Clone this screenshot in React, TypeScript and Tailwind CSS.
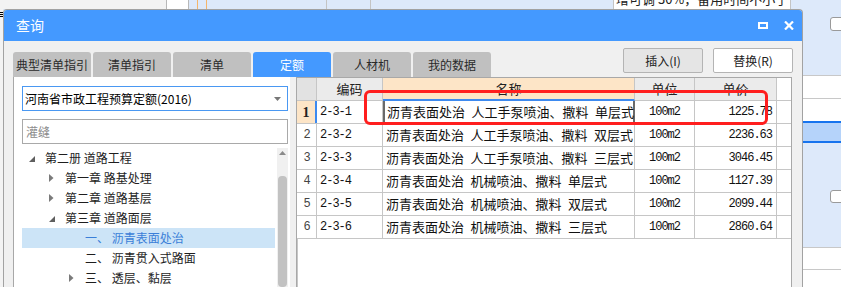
import React from "react";

type Row = { no: number; code: string; name: string; unit: string; price: string };

const rows: Row[] = [
  { no: 1, code: "2-3-1", name: "沥青表面处治\u2002人工手泵喷油、撒料\u2002单层式", unit: "100m2", price: "1225.78" },
  { no: 2, code: "2-3-2", name: "沥青表面处治\u2002人工手泵喷油、撒料\u2002双层式", unit: "100m2", price: "2236.63" },
  { no: 3, code: "2-3-3", name: "沥青表面处治\u2002人工手泵喷油、撒料\u2002三层式", unit: "100m2", price: "3046.45" },
  { no: 4, code: "2-3-4", name: "沥青表面处治\u2002机械喷油、撒料\u2002单层式", unit: "100m2", price: "1127.39" },
  { no: 5, code: "2-3-5", name: "沥青表面处治\u2002机械喷油、撒料\u2002双层式", unit: "100m2", price: "2099.44" },
  { no: 6, code: "2-3-6", name: "沥青表面处治\u2002机械喷油、撒料\u2002三层式", unit: "100m2", price: "2860.64" },
];

type Node = { label: string; level: 0 | 1 | 2; arrow?: "open" | "closed"; selected?: boolean };

const tree: Node[] = [
  { label: "第二册 道路工程", level: 0, arrow: "open" },
  { label: "第一章 路基处理", level: 1, arrow: "closed" },
  { label: "第二章 道路基层", level: 1, arrow: "closed" },
  { label: "第三章 道路面层", level: 1, arrow: "open" },
  { label: "一、 沥青表面处治", level: 2, selected: true },
  { label: "二、 沥青贯入式路面", level: 2 },
  { label: "三、 透层、黏层", level: 2, arrow: "closed" },
];

const tabs = ["典型清单指引", "清单指引", "清单", "定额", "人材机", "我的数据"];

const indent: Record<number, string> = { 0: "pl-[7px]", 1: "pl-[27px]", 2: "pl-[47px]" };

const mono = "font-['Liberation_Mono','Noto_Sans_CJK_SC',monospace] text-[12px] tracking-[-1px]";

function Arrow({ kind }: { kind?: "open" | "closed" }) {
  if (kind === "open")
    return (
      <svg width="6" height="6" viewBox="0 0 6 6" className="mt-[1px]">
        <path d="M6 0V6H0Z" fill="#5f5f5f" />
      </svg>
    );
  if (kind === "closed")
    return (
      <svg width="5" height="8" viewBox="0 0 5 8">
        <path d="M0 0L4.5 4L0 8Z" fill="#7a7a7a" />
      </svg>
    );
  return null;
}

function TreeRow({ node }: { node: Node }) {
  return (
    <div
      className={`flex h-[20px] items-center ${indent[node.level]} ${
        node.selected ? "bg-[#cce4f7] text-[#3a7fd8]" : "text-[#1e1e1e]"
      }`}
    >
      <span className="flex w-[16px] items-center">
        <Arrow kind={node.arrow} />
      </span>
      <span className="whitespace-pre">{node.label}</span>
    </div>
  );
}

function GridRow({ row }: { row: Row }) {
  const sel = row.no === 1;
  return (
    <div className="flex h-[23px] border-b border-[#c6c6c6]">
      <div
        className={`flex w-[20px] items-center justify-center ${
          sel
            ? "bg-[#fde5c7] border-r-2 border-[#3d8af0] font-['Liberation_Serif',serif] text-[14px] font-bold text-[#222]"
            : `border-r border-[#c6c6c6] ${mono} text-[#444]`
        }`}
      >
        {row.no}
      </div>
      <div className={`flex w-[66px] items-center border-r border-[#c6c6c6] pl-[3px] ${mono} text-[#111]`}>
        {row.code}
      </div>
      <div
        className={`flex w-[252px] items-center pl-[2px] text-[13px] text-[#111] whitespace-pre ${
          sel ? "border-x-2 border-[#6a6a6a]" : "border-r border-[#c6c6c6] pl-[3px]"
        }`}
      >
        {row.name}
      </div>
      <div className={`flex w-[60px] items-center justify-center border-r border-[#c6c6c6] ${mono} text-[#111]`}>
        {row.unit}
      </div>
      <div className={`flex w-[82px] items-center justify-end border-r border-[#c6c6c6] pr-[4px] ${mono} text-[#111]`}>
        {row.price}
      </div>
    </div>
  );
}

export default function App() {
  return (
    <div className="relative flex h-[287px] w-[841px] overflow-hidden bg-[#dde9fa] font-['Noto_Sans_CJK_SC',sans-serif] text-[12px]">
      {/* main column: background strip + dialog */}
      <div className="flex w-[803px] flex-col">
        {/* background app, top strip */}
        <div className="flex h-[9px] shrink-0">
          <div className="w-[167px] border-r border-[#b8b8b8] bg-[#f3f3f3]" />
          <div className="w-[22px] border-r border-[#b8b8b8] bg-white" />
          <div className="w-[9px] border-r border-[#f5b56a]" />
          <div className="w-[9px] border-r border-[#f5b56a]" />
          <div className="w-[120px] border-r border-[#c4c4c4]" />
          <div className="w-[44px] border-r border-[#c4c4c4]" />
          <div className="w-[242px]" />
          <div className="w-[178px] overflow-hidden border-x border-[#c4c4c4] bg-white">
            <div className="-mt-[9px] whitespace-nowrap pl-[2px] text-[13px] leading-[16px] text-[#222]">
              增可调 30%，备用时间不小于
            </div>
          </div>
        </div>
        <div className="flex min-h-0 flex-1">
          <div className="w-[3px] bg-[#f3f3f3]">
            <div className="mt-[3px] h-[1px] w-[3px] bg-black" />
            <div className="mt-[1px] h-[1px] w-[3px] bg-black" />
            <div className="mt-[1px] h-[1px] w-[3px] bg-black" />
          </div>

          {/* dialog */}
          <div className="flex w-[800px] flex-col overflow-hidden rounded-t-[4px] border border-b-0 border-[#a2a2a2] bg-[#f0f0f0]">
            <div className="flex h-[31px] shrink-0 items-center bg-[#4499ff] pl-[12px] pr-[8px] text-white">
              <span className="text-[14px]">查询</span>
              <div className="ml-auto flex items-center gap-[16px]">
                <div className="h-[7px] w-[10px] border-2 border-white" />
                <svg width="10" height="9" viewBox="0 0 10 9">
                  <path d="M1 0.5L9 8.5M9 0.5L1 8.5" stroke="white" strokeWidth="2.2" />
                </svg>
              </div>
            </div>

            <div className="flex min-h-0 flex-1 flex-col px-[9px]">
              {/* tabs + buttons */}
              <div className="flex h-[36px] shrink-0 pt-[7px]">
                <div className="flex gap-[2px] self-end">
                  {tabs.map((t) => (
                    <div
                      key={t}
                      className={`flex h-[25px] w-[78px] items-center justify-center rounded-t-[3px] ${
                        t === "定额" ? "bg-[#4499ff] text-white" : "bg-[#c0c0c0] text-[#2a2a2a]"
                      }`}
                    >
                      {t}
                    </div>
                  ))}
                </div>
                <div className="ml-auto flex gap-[10px] self-start">
                  <button className="h-[25px] w-[80px] rounded-[2px] border border-[#b4b4b4] bg-[#e5e5e5] text-[#222]">
                    插入(I)
                  </button>
                  <button className="h-[25px] w-[80px] rounded-[2px] border border-[#b4b4b4] bg-white text-[#222]">
                    替换(R)
                  </button>
                </div>
              </div>

              {/* content */}
              <div className="flex min-h-0 flex-1">
                {/* left panel */}
                <div className="flex w-[277px] flex-col border-l border-[#a8a8a8] bg-white pl-[8px] pr-[2px] pt-[9px]">
                  <div className="flex h-[25px] items-center border border-[#4a98f2] pl-[2px] pr-[6px] text-black">
                    <span>河南省市政工程预算定额(2016)</span>
                    <svg width="7" height="4" viewBox="0 0 7 4" className="ml-auto">
                      <path d="M0 0H7L3.5 4Z" fill="#777" />
                    </svg>
                  </div>
                  <div className="mt-[8px] flex h-[25px] items-center border border-[#a9a9a9] pl-[3px] text-[#8c8c8c]">
                    灌缝
                  </div>
                  <div className="mt-[4px] flex min-h-0 flex-1">
                    <div className="w-[253px]">
                      {tree.map((n) => (
                        <TreeRow key={n.label} node={n} />
                      ))}
                    </div>
                    <div className="ml-[2px] flex w-[11px] flex-col items-center bg-[#f0f0f0]">
                      <svg width="7" height="4" viewBox="0 0 7 4" className="mt-[3px]">
                        <path d="M0 4H7L3.5 0Z" fill="#8a8a8a" />
                      </svg>
                      <div className="mt-[21px] w-[9px] flex-1 rounded-[4px] bg-[#c2c2c2]" />
                    </div>
                  </div>
                </div>

                {/* grid */}
                <div className="ml-[6px] flex w-[496px] flex-col border-l border-r border-t border-[#a8a8a8] bg-white">
                  <div className="flex h-[23px] border-b border-[#c6c6c6] text-[13px] text-[#222]">
                    <div className="w-[20px] border-r border-[#c6c6c6] bg-[#e2e2e2]" />
                    <div className="flex w-[66px] items-center justify-center border-r border-[#c6c6c6] bg-[#ebebeb]">
                      编码
                    </div>
                    <div className="-mb-[1px] flex w-[252px] items-center justify-center border-b-2 border-r border-[#c6c6c6] border-b-[#3d8af0] bg-[#fde5c7]">
                      名称
                    </div>
                    <div className="flex w-[60px] items-center justify-center border-r border-[#c6c6c6] bg-[#ebebeb]">
                      单位
                    </div>
                    <div className="flex w-[82px] items-center justify-center border-r border-[#c6c6c6] bg-[#ebebeb]">
                      单价
                    </div>
                  </div>
                  {rows.map((r) => (
                    <GridRow key={r.no} row={r} />
                  ))}
                  <div className="w-[0px] flex-1 border-l border-[#c6c6c6]" />
                </div>
              </div>
            </div>
          </div>
        </div>
      </div>

      {/* background app, right strip */}
      <div className="flex w-[38px] flex-col">
        <div className="h-[75px] pt-[17px]">
          <div className="ml-[27px] h-[14px] w-[20px] rounded-[3px] border border-[#9a9a9a] bg-white" />
        </div>
        <div className="h-[24px] border-y border-[#c8c8c8] bg-white" />
        <div className="h-[22px] bg-white" />
        <div className="h-[22px] border-y-2 border-[#1673ee] bg-[#b5d3fa]" />
        <div className="h-[104px] pt-[47px]">
          <div className="ml-[27px] h-[13px] w-[20px] rounded-[3px] border border-[#9a9a9a] bg-white" />
        </div>
        <div className="h-[23px] border-y border-[#c8c8c8] bg-white" />
        <div className="flex-1 bg-white" />
      </div>

      {/* annotation */}
      <div className="absolute left-[364px] top-[90px] h-[35px] w-[404px] rounded-[6px] border-[3px] border-[#ff1e1e]" />
    </div>
  );
}
